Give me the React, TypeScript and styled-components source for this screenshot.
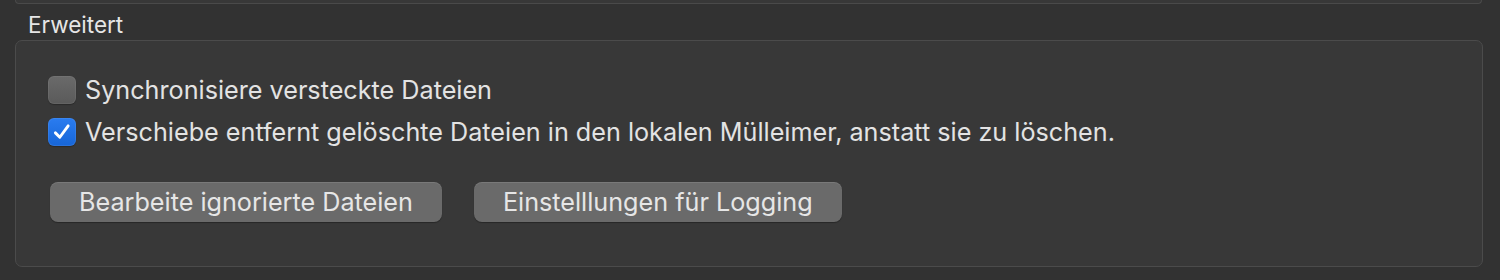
import React, { useState } from "react";
import styled, { createGlobalStyle } from "styled-components";

const GlobalStyle = createGlobalStyle`
  html, body {
    margin: 0;
    padding: 0;
    background: #323232;
  }
  body {
    font-family: Inter, "Noto Sans", "Liberation Sans", sans-serif;
    color: #e2e2e2;
  }
`;

type Option = { label: string; checked: boolean };

const initialOptions: Option[] = [
  { label: "Synchronisiere versteckte Dateien", checked: false },
  {
    label:
      "Verschiebe entfernt gelöschte Dateien in den lokalen Mülleimer, anstatt sie zu löschen.",
    checked: true,
  },
];

export default function App() {
  const [options, setOptions] = useState(initialOptions);

  const toggle = (index: number) =>
    setOptions((prev) =>
      prev.map((o, i) => (i === index ? { ...o, checked: !o.checked } : o))
    );

  return (
    <>
      <GlobalStyle />
      <Page>
        <PreviousPanel />
        <SectionTitle>Erweitert</SectionTitle>
        <GroupBox>
          <OptionList>
            {options.map((option, index) => (
              <OptionRow key={index} onClick={() => toggle(index)}>
                <CheckBox $checked={option.checked}>
                  {option.checked && (
                    <svg width="22" height="22" viewBox="0 0 20 20">
                      <path
                        d="M4 10.8 L8 14.8 L15.6 4.4"
                        fill="none"
                        stroke="#fff"
                        strokeWidth="2.6"
                        strokeLinecap="round"
                        strokeLinejoin="round"
                      />
                    </svg>
                  )}
                </CheckBox>
                <span>{option.label}</span>
              </OptionRow>
            ))}
          </OptionList>
          <ButtonRow>
            <PushButton>Bearbeite ignorierte Dateien</PushButton>
            <PushButton>Einstelllungen für Logging</PushButton>
          </ButtonRow>
        </GroupBox>
      </Page>
    </>
  );
}

const Page = styled.div`
  display: flex;
  flex-direction: column;
  padding: 0 17px 0 15px;
`;

const PreviousPanel = styled.div`
  height: 3px;
  border: 1px solid #4a4a4a;
  border-top: none;
  border-radius: 0 0 6px 6px;
  background: #383838;
  margin-right: 1px;
`;

const SectionTitle = styled.div`
  margin: 7px 0 0 13px;
  font-size: 22.5px;
  line-height: 28px;
  color: #e6e6e6;
`;

const GroupBox = styled.div`
  margin-top: 1px;
  height: 227px;
  box-sizing: border-box;
  border: 1.5px solid #4b4b4b;
  border-radius: 7px;
  background: #383838;
  padding: 35px 0 0 32px;
  display: flex;
  flex-direction: column;
`;

const OptionList = styled.div`
  display: flex;
  flex-direction: column;
  gap: 14px;
`;

const OptionRow = styled.label`
  display: flex;
  align-items: center;
  gap: 9px;
  font-size: 25.2px;
  line-height: 28px;
  color: #e3e3e3;
  user-select: none;
`;

const CheckBox = styled.span<{ $checked: boolean }>`
  width: 28px;
  height: 28px;
  box-sizing: border-box;
  border-radius: 6px;
  display: flex;
  align-items: center;
  justify-content: center;
  flex-shrink: 0;
  background: ${(p) =>
    p.$checked
      ? "linear-gradient(#2a7cf0, #1766d8)"
      : "linear-gradient(#6a6a6a, #5a5a5a)"};
  box-shadow: inset 0 0 0 1px
      ${(p) => (p.$checked ? "rgba(255,255,255,0.08)" : "rgba(255,255,255,0.06)")},
    0 1px 1px rgba(0, 0, 0, 0.25);
`;

const ButtonRow = styled.div`
  display: flex;
  gap: 32px;
  margin: 36px 0 0 2px;
`;

const PushButton = styled.button`
  height: 40px;
  padding: 0 29px;
  border: none;
  border-radius: 8px;
  background: #6a6a6a;
  box-shadow: inset 0 1px 0 rgba(255, 255, 255, 0.1), 0 1px 1px rgba(0, 0, 0, 0.3);
  color: #e6e6e6;
  font-family: inherit;
  font-size: 25.2px;
  line-height: 40px;
`;
